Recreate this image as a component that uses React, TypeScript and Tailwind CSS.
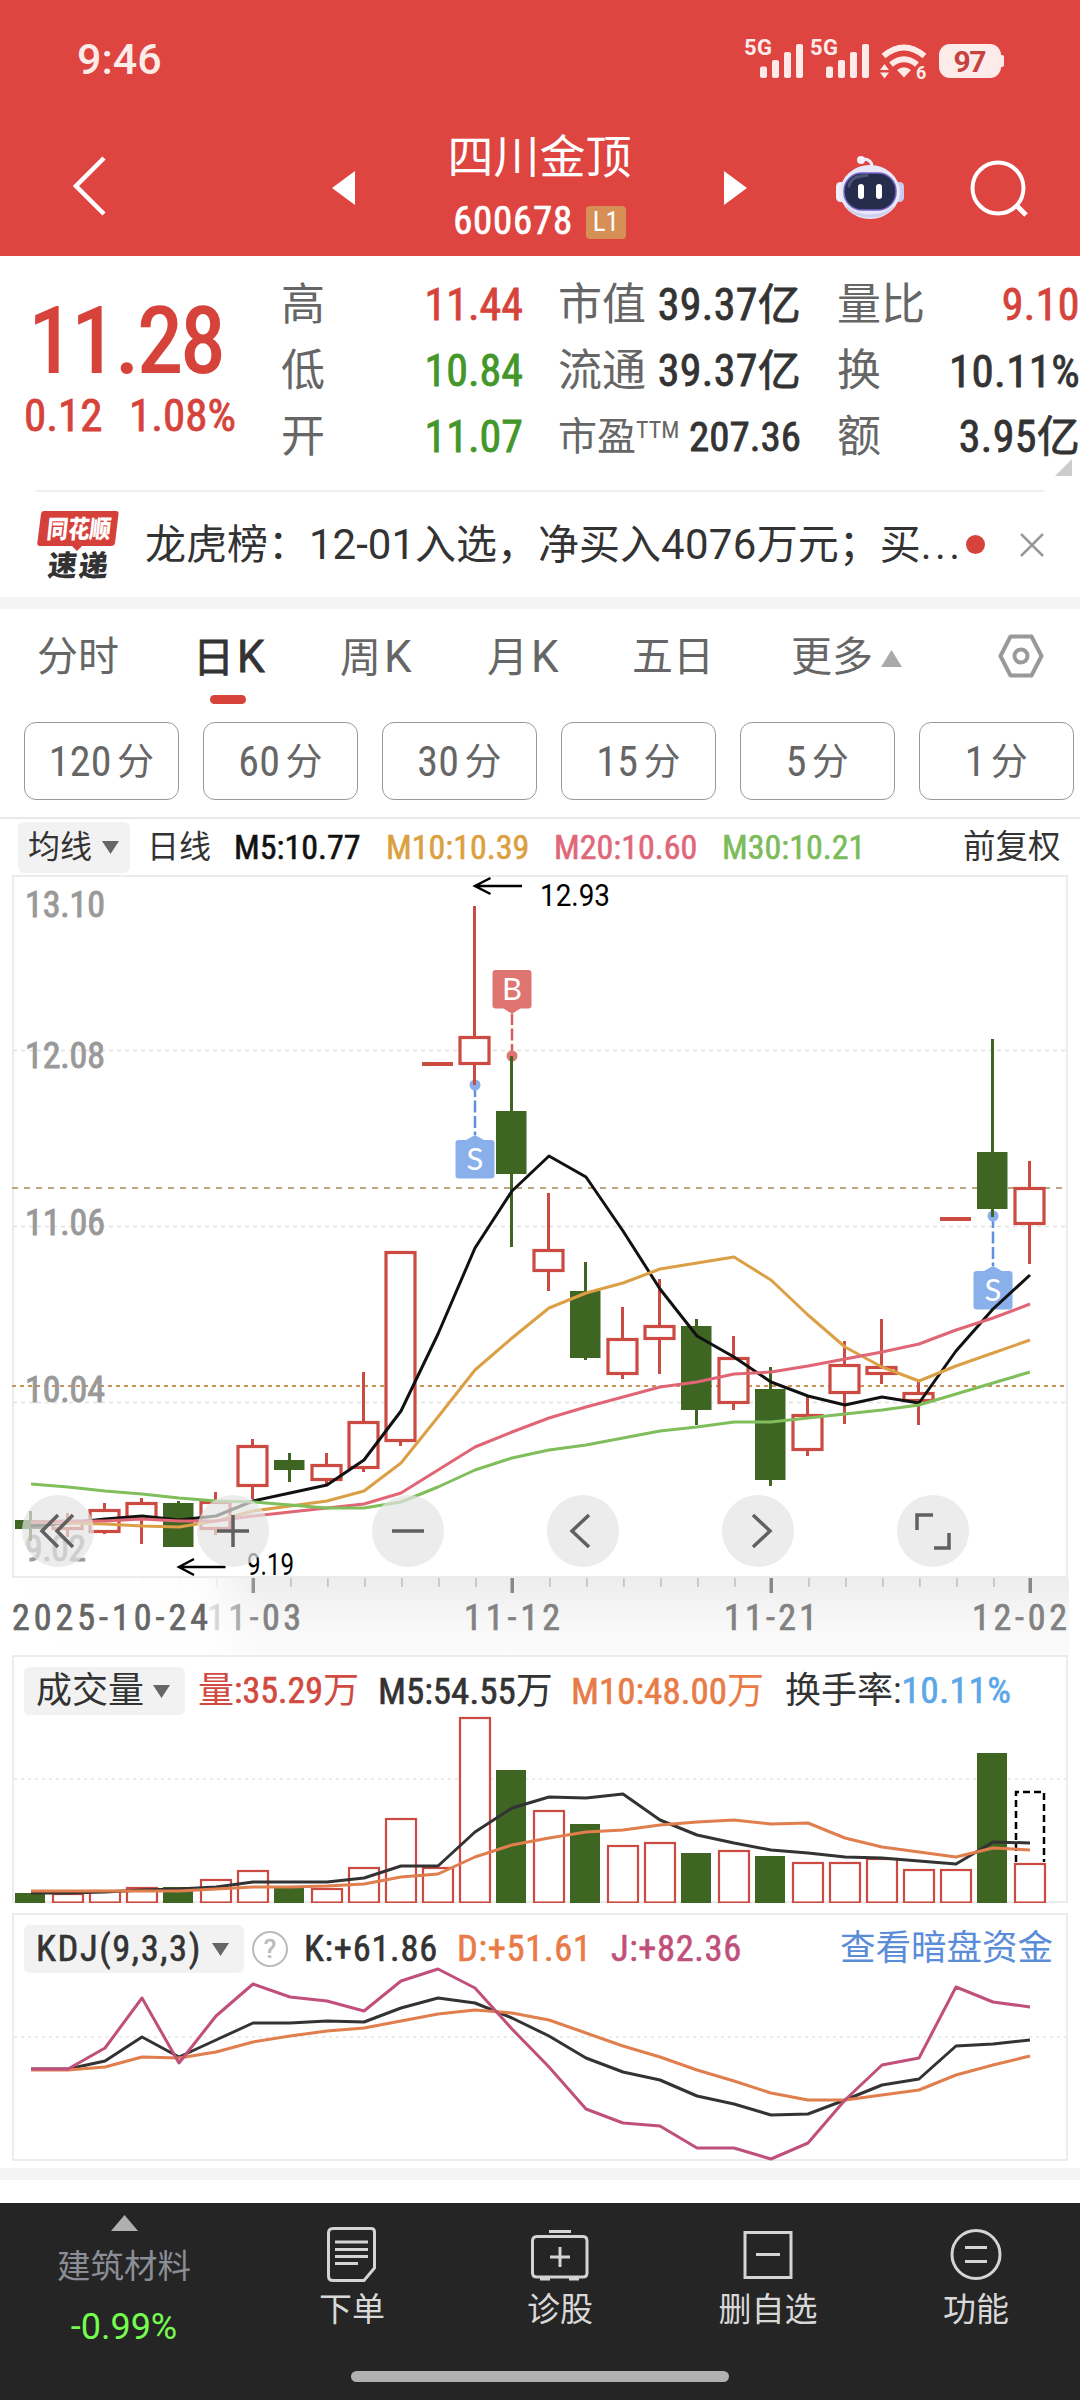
import type { ReactNode } from 'react';

type Candle = { up: boolean; high: number; top: number; bottom: number; low: number };

// 28 daily candles, oldest first, in chart units
const candles: Candle[] = [
    { up: false, high: 1511, top: 1520, bottom: 1529, low: 1541 },
    { up: true, high: 1513, top: 1520, bottom: 1530, low: 1537 },
    { up: true, high: 1503, top: 1509, bottom: 1533, low: 1534 },
    { up: true, high: 1498, top: 1502, bottom: 1519, low: 1544 },
    { up: false, high: 1501, top: 1503, bottom: 1547, low: 1547 },
    { up: true, high: 1492, top: 1501, bottom: 1530, low: 1535 },
    { up: true, high: 1439, top: 1445, bottom: 1487, low: 1499 },
    { up: false, high: 1453, top: 1460, bottom: 1470, low: 1482 },
    { up: true, high: 1453, top: 1464, bottom: 1481, low: 1486 },
    { up: true, high: 1372, top: 1421, bottom: 1469, low: 1472 },
    { up: true, high: 1251, top: 1251, bottom: 1442, low: 1446 },
    { up: true, high: 1062, top: 1062, bottom: 1066, low: 1066 },
    { up: true, high: 906, top: 1036, bottom: 1065, low: 1085 },
    { up: false, high: 1056, top: 1111, bottom: 1174, low: 1247 },
    { up: true, high: 1193, top: 1249, bottom: 1272, low: 1291 },
    { up: false, high: 1262, top: 1291, bottom: 1358, low: 1360 },
    { up: true, high: 1307, top: 1338, bottom: 1375, low: 1379 },
    { up: true, high: 1279, top: 1325, bottom: 1340, low: 1374 },
    { up: false, high: 1319, top: 1326, bottom: 1410, low: 1425 },
    { up: true, high: 1336, top: 1357, bottom: 1404, low: 1410 },
    { up: false, high: 1367, top: 1389, bottom: 1480, low: 1486 },
    { up: true, high: 1396, top: 1414, bottom: 1451, low: 1456 },
    { up: true, high: 1341, top: 1364, bottom: 1394, low: 1424 },
    { up: true, high: 1319, top: 1366, bottom: 1375, low: 1384 },
    { up: true, high: 1381, top: 1392, bottom: 1402, low: 1425 },
    { up: true, high: 1217, top: 1217, bottom: 1221, low: 1221 },
    { up: false, high: 1039, top: 1152, bottom: 1209, low: 1217 },
    { up: true, high: 1161, top: 1187, bottom: 1225, low: 1264 },
];

const ma5 = [1526, 1523, 1519, 1516, 1520, 1516, 1501, 1493, 1485, 1460, 1411, 1334, 1248, 1191, 1156, 1177, 1231, 1289, 1336, 1357, 1382, 1396, 1405, 1397, 1403, 1351, 1309, 1275];
const ma10 = [1522, 1523, 1524, 1526, 1527, 1521, 1511, 1506, 1501, 1491, 1463, 1417, 1370, 1338, 1308, 1293, 1283, 1269, 1263, 1257, 1280, 1315, 1347, 1367, 1381, 1366, 1353, 1340];
const ma20 = [1522, 1521, 1521, 1519, 1521, 1521, 1516, 1512, 1508, 1504, 1493, 1470, 1447, 1432, 1418, 1407, 1397, 1387, 1382, 1374, 1372, 1366, 1359, 1352, 1344, 1330, 1318, 1304];
const ma30 = [1484, 1487, 1491, 1494, 1498, 1501, 1502, 1505, 1508, 1508, 1502, 1487, 1470, 1458, 1450, 1445, 1438, 1431, 1427, 1422, 1422, 1418, 1414, 1410, 1405, 1394, 1383, 1372];

const volumes = [1893, 1893, 1890, 1887, 1887, 1879, 1870, 1887, 1888, 1867, 1818, 1867, 1717, 1770, 1810, 1824, 1845, 1842, 1853, 1850, 1856, 1862, 1862, 1858, 1869, 1869, 1753, 1863];
const vol5 = [1893, 1893, 1892, 1890, 1889, 1887, 1882, 1882, 1882, 1878, 1866, 1866, 1832, 1808, 1797, 1798, 1794, 1820, 1835, 1843, 1850, 1853, 1857, 1858, 1861, 1864, 1842, 1843];
const vol10 = [1891, 1891, 1891, 1891, 1891, 1889, 1887, 1887, 1886, 1884, 1877, 1874, 1857, 1845, 1838, 1832, 1830, 1825, 1822, 1820, 1824, 1823, 1838, 1847, 1852, 1857, 1848, 1850];

const kLine = [2069, 2069, 2061, 2037, 2057, 2040, 2023, 2023, 2021, 2022, 2008, 1998, 2003, 2018, 2036, 2058, 2072, 2080, 2096, 2104, 2115, 2114, 2100, 2085, 2079, 2046, 2044, 2040];
const dLine = [2070, 2070, 2067, 2057, 2058, 2052, 2042, 2036, 2031, 2028, 2021, 2014, 2010, 2013, 2020, 2033, 2046, 2057, 2070, 2081, 2093, 2100, 2100, 2095, 2090, 2075, 2065, 2056];
const jLine = [2069, 2069, 2048, 1998, 2063, 2016, 1984, 1997, 2001, 2011, 1981, 1969, 1988, 2029, 2067, 2109, 2123, 2126, 2148, 2148, 2159, 2143, 2100, 2065, 2058, 1987, 2002, 2007];

const RED = '#cb4a42';
const GREEN = '#3f6522';

const xAt = (i: number) => 31 + i * 37;
const toPoints = (values: number[]) => values.map((y, i) => `${xAt(i)},${y}`).join(' ');

function Line({ values, color, width = 3 }: { values: number[]; color: string; width?: number }) {
    return <polyline points={toPoints(values)} fill="none" stroke={color} strokeWidth={width} strokeLinejoin="round" />;
}

function StatusBar() {
    return (
        <div className="flex h-[118px] items-center justify-between pr-[70px] pl-[77px] text-[#fdebea]">
            <span className="text-[43px] leading-none font-medium font-['Roboto']">9:46</span>
            <svg width="270" height="60" viewBox="740 27 270 60" fill="currentColor">
                <g fontFamily="Roboto" fontWeight="700" fontSize="22">
                    <text x="744" y="53" textLength="28">5G</text>
                    <text x="810" y="53" textLength="28">5G</text>
                </g>
                {[0, 66].map((dx) => (
                    <g key={dx}>
                        <rect x={760 + dx} y="64.5" width="7" height="11.5" rx="2" />
                        <rect x={772 + dx} y="58" width="7" height="18" rx="2" />
                        <rect x={784 + dx} y="50" width="7" height="26" rx="2" />
                        <rect x={796 + dx} y="42" width="7" height="34" rx="2" />
                    </g>
                ))}
                <path d="M883.500 54 Q904 37 924.500 54" fill="none" stroke="currentColor" strokeWidth="6" />
                <path d="M891 62.500 Q904 52 917 62.500" fill="none" stroke="currentColor" strokeWidth="6" />
                <path d="M897 68 Q904 62.500 911 68 L904 75.500Z" />
                <path d="M880 68 L884.500 62 L889 68Z M880 70.500 L884.500 76.500 L889 70.500Z" />
                <text x="916" y="77" fontFamily="Roboto" fontWeight="700" fontSize="18">6</text>
                <rect x="939" y="42" width="62" height="34" rx="11" />
                <rect x="999" y="53" width="5" height="12" rx="2" />
                <text x="970" y="70" textAnchor="middle" fontFamily="Roboto" fontWeight="700" fontSize="30" fill="#c5423f" textLength="33">97</text>
            </svg>
        </div>
    );
}

function RobotIcon() {
    return (
        <svg width="70" height="66" viewBox="0 0 70 66">
            <path d="M37 13 C37 7 33 5 28 5" fill="none" stroke="#ece9fa" strokeWidth="3" />
            <circle cx="26" cy="6" r="4" fill="#f3effb" />
            <rect x="1" y="28" width="9" height="20" rx="4.500" fill="#efeefa" />
            <rect x="60" y="28" width="9" height="20" rx="4.500" fill="#c9cbf3" />
            <ellipse cx="35" cy="38" rx="30" ry="27" fill="#e9e8f8" />
            <path d="M10 50 C20 64 50 64 60 50 C54 68 16 68 10 50Z" fill="#cfd0f0" />
            <rect x="9" y="19" width="52" height="37" rx="18" fill="#262c4c" stroke="#7364c8" strokeWidth="1.500" />
            <path d="M14 32 C16 24 22 22 32 21.500" fill="none" stroke="#4c5474" strokeWidth="3" strokeLinecap="round" />
            <rect x="23" y="30" width="6" height="15" rx="3" fill="#fff" />
            <rect x="41" y="30" width="6" height="15" rx="3" fill="#fff" />
        </svg>
    );
}

function Header() {
    return (
        <header className="h-[256px] bg-[#de4440] text-white">
            <StatusBar />
            <nav className="flex h-[138px] items-center pl-[73px]">
                <svg width="34" height="60" viewBox="0 0 34 60" fill="none" stroke="white" strokeWidth="4.500" className="mb-0.5">
                    <path d="M31 2 L3 30 L31 58" />
                </svg>
                <svg width="23" height="34" viewBox="0 0 23 34" fill="white" className="mt-0.5 ml-[225px]">
                    <path d="M23 0 V34 L0 17Z" />
                </svg>
                <div className="flex w-[369px] flex-col items-center">
                    <h1 className="text-[46px] leading-[54px]">四川金顶</h1>
                    <div className="mt-[11px] flex items-center gap-[13px]">
                        <span className="pt-[3px] text-[39px] leading-[47px] tracking-[0.7px] [-webkit-text-stroke:0.7px]">600678</span>
                        <span className="mt-[5px] flex h-[33px] w-10 items-center justify-center rounded bg-[#d68f55] text-[27px] leading-none">L1</span>
                    </div>
                </div>
                <svg width="23" height="34" viewBox="0 0 23 34" fill="white" className="mt-0.5">
                    <path d="M0 0 V34 L23 17Z" />
                </svg>
                <div className="ml-[88px]">
                    <RobotIcon />
                </div>
                <svg width="58" height="58" viewBox="0 0 58 58" fill="none" stroke="white" strokeWidth="4" className="mt-[3px] ml-[65px]">
                    <circle cx="28" cy="28" r="25.500" />
                    <path d="M46 45 L56 55" strokeWidth="5" />
                </svg>
            </nav>
        </header>
    );
}

function Label({ children }: { children: ReactNode }) {
    return <dt className="text-[#666] [-webkit-text-stroke:0px]">{children}</dt>;
}

function Quote() {
    return (
        <section className="relative flex h-[234px] pt-[16px] leading-none text-[#333] [-webkit-text-stroke:0.8px]">
            <div className="w-[271px] text-[#d6433b]">
                <div className="mt-[23px] pl-[29px] text-[91px] leading-[92px] tracking-[-1.8px] [-webkit-text-stroke:2px]">11.28</div>
                <div className="mt-[3px] flex pl-[24px] text-[45px] leading-[52px]">
                    <span className="w-[105px]">0.12</span>
                    <span>1.08%</span>
                </div>
            </div>
            <dl className="grid w-[252px] auto-rows-[66px] grid-cols-[auto_1fr] items-center pl-[10px] text-[44px]">
                <Label>高</Label>
                <dd className="text-right text-[#d6433b]">11.44</dd>
                <Label>低</Label>
                <dd className="text-right text-[#43962a]">10.84</dd>
                <Label>开</Label>
                <dd className="text-right text-[#43962a]">11.07</dd>
            </dl>
            <dl className="ml-[35px] grid w-[243px] auto-rows-[66px] grid-cols-[auto_1fr] items-center text-[44px]">
                <Label>市值</Label>
                <dd className="text-right tracking-[0.3px]">
                    39.37<span className="text-[43px]">亿</span>
                </dd>
                <Label>流通</Label>
                <dd className="text-right tracking-[0.3px]">
                    39.37<span className="text-[43px]">亿</span>
                </dd>
                <div className="col-span-2 flex items-center justify-between text-[41px]">
                    <dt className="flex text-[39px] text-[#666] [-webkit-text-stroke:0px]">
                        市盈
                        <span className="text-[24px] leading-[24px]">TTM</span>
                    </dt>
                    <dd>207.36</dd>
                </div>
            </dl>
            <dl className="ml-[36px] grid w-[243px] auto-rows-[66px] grid-cols-[auto_1fr] items-center text-[44px]">
                <Label>量比</Label>
                <dd className="text-right tracking-[0.4px] text-[#d6433b]">9.10</dd>
                <Label>换</Label>
                <dd className="text-right text-[45px] tracking-[0.3px]">10.11%</dd>
                <Label>额</Label>
                <dd className="text-right tracking-[0.3px]">
                    3.95<span className="text-[43px]">亿</span>
                </dd>
            </dl>
            <svg width="17" height="17" viewBox="0 0 17 17" className="absolute right-2 bottom-[14px] fill-[#ccc]">
                <path d="M17 0 V17 H0Z" />
            </svg>
        </section>
    );
}

function NewsTicker() {
    return (
        <section className="mx-9 flex h-[107px] items-center border-t-2 border-[#eee]">
            <svg width="100" height="84" viewBox="0 -7 100 84" fontFamily="'Noto Sans CJK SC', sans-serif" fontWeight="900" className="shrink-0">
                <path d="M8 1 H80 Q83 1 82.500 4 L79 33 Q78.500 36 75 36 H46 L41 41 L36 36 H4 Q1 36 1.300 33 L5 4 Q5.400 1 8 1Z" fill="#d6403a" />
                <text x="13" y="28" fontSize="25" fill="#fff" textLength="64" lengthAdjust="spacingAndGlyphs" transform="skewX(-6)">同花顺</text>
                <text x="18" y="66" fontSize="29" fill="#333" textLength="60" transform="skewX(-6)">速递</text>
            </svg>
            <p className="ml-[9px] w-[821px] shrink-0 text-[41px] leading-none whitespace-nowrap text-[#333]">
                龙虎榜：<span className="font-['Roboto'] text-[42px]">12-01</span>入选，净买入
                <span className="font-['Roboto'] text-[42px] tracking-[0.3px]">4076</span>万元；买<span className="tracking-[3.5px]">...</span>
            </p>
            <span className="h-[19px] w-[19px] rounded-full bg-[#d6433b]" />
            <svg width="24" height="24" viewBox="0 0 24 24" stroke="#999" strokeWidth="2.500" className="ml-[35px]">
                <path d="M1 1 L23 23 M23 1 L1 23" />
            </svg>
        </section>
    );
}

const periods = [
    { label: '分时', width: 'w-[156px]' },
    { label: '日K', width: 'w-[147px]', active: true },
    { label: '周K', width: 'w-[147px]' },
    { label: '月K', width: 'w-[145px]' },
    { label: '五日', width: 'w-[159px]' },
];

function PeriodTabs() {
    return (
        <nav className="flex h-[97px] items-start pt-[17px] pl-[37px] text-[41px] leading-[62px] text-[#666]">
            {periods.map(({ label, width, active }) => (
                <div key={label} className={width}>
                    <div className={active ? 'relative inline-block text-[#333] [-webkit-text-stroke:0.8px]' : 'inline-block'}>
                        {label.replace('K', '')}
                        {label.endsWith('K') && <span className="ml-[3px] text-[44px] font-['Roboto']">K</span>}
                        {active && <span className="absolute top-[69px] left-[17px] h-[9px] w-9 rounded-full bg-[#d6433b]" />}
                    </div>
                </div>
            ))}
            <div className="flex items-center">
                更多
                <svg width="21" height="17" viewBox="0 0 21 17" className="mt-0.5 ml-2 fill-[#aaa]">
                    <path d="M10.500 0 L21 17 H0Z" />
                </svg>
            </div>
            <svg width="46" height="44" viewBox="0 0 46 44" fill="none" stroke="#999" strokeWidth="4" strokeLinejoin="round" className="mt-[8px] ml-[96px]">
                <path d="M12.500 2.500 H33.500 L43.500 22 L33.500 41.500 H12.500 L2.500 22Z" />
                <circle cx="23" cy="22" r="6.500" />
            </svg>
        </nav>
    );
}

function MinuteButtons() {
    return (
        <div className="flex gap-6 pt-4 pl-6">
            {['120', '60', '30', '15', '5', '1'].map((minutes) => (
                <button
                    key={minutes}
                    className="flex h-[78px] w-[155px] shrink-0 items-center justify-center gap-[5px] rounded-[12px] border border-[#999] pt-0.5 text-[42px] leading-none tracking-[0.3px] text-[#666]"
                >
                    {minutes}
                    <span className="text-[37px]">分</span>
                </button>
            ))}
        </div>
    );
}

function Chip({ className, children }: { className: string; children: ReactNode }) {
    return (
        <button className={`flex shrink-0 items-center justify-between rounded-md bg-[#f2f2f2] leading-none text-[#333] ${className}`}>
            {children}
            <svg width="17" height="13" viewBox="0 0 17 13" className="fill-[#666]">
                <path d="M0 0 H17 L8.500 13Z" />
            </svg>
        </button>
    );
}

function AverageLegend() {
    return (
        <div className="mt-[17px] flex h-[58px] items-center border-t-2 border-[#e8e8e8] pl-[18px] text-[34px] leading-none [-webkit-text-stroke:0.6px]">
            <Chip className="h-[51px] w-28 pr-[11px] pl-[10px] text-[32px] [-webkit-text-stroke:0px]">均线</Chip>
            <span className="ml-[17px] w-[87px] text-[32px] text-[#333] [-webkit-text-stroke:0px]">日线</span>
            <span className="w-[152px] text-[#111]">M5:10.77</span>
            <span className="w-[168px] text-[#dba03f]">M10:10.39</span>
            <span className="w-[168px] text-[#e0677a]">M20:10.60</span>
            <span className="w-[241px] text-[#7cbb5a]">M30:10.21</span>
            <span className="text-[32.5px] text-[#333] [-webkit-text-stroke:0px]">前复权</span>
        </div>
    );
}

function TradeMark({ x, y, side, dotY }: { x: number; y: number; side: 'B' | 'S'; dotY: number }) {
    const buy = side === 'B';
    const fill = buy ? '#df7571' : '#8ab0ec';
    const tip = buy ? y + 44 : y - 5;
    const base = buy ? y + 38 : y;
    return (
        <g>
            <line x1={x} x2={x} y1={dotY} y2={tip} stroke={buy ? '#d4605c' : '#5f92dd'} strokeWidth="2.500" strokeDasharray="12 3.500" />
            <circle cx={x} cy={dotY} r="5.500" fill={fill} />
            <path d={`M${x - 9} ${base} L${x} ${tip} L${x + 9} ${base}Z`} fill={fill} />
            <rect x={x - 19.5} y={y} width="39" height="38.500" rx="3" fill={fill} />
            <text x={x} y={y + 30} textAnchor="middle" fontFamily="Lato" fontSize="31" fill="#fff">
                {side}
            </text>
        </g>
    );
}

function CandleShape({ candle, x }: { candle: Candle; x: number }) {
    const { up, high, top, bottom, low } = candle;
    if (bottom - top <= 4) {
        return <rect x={x - 16} y={top} width="31" height="4" fill={RED} />;
    }
    const color = up ? RED : GREEN;
    return (
        <g>
            <line x1={x - 0.5} x2={x - 0.5} y1={high} y2={low} stroke={color} strokeWidth="3" />
            {up ? (
                <rect x={x - 15} y={top + 1.5} width="29" height={bottom - top - 3} fill="#fff" stroke={RED} strokeWidth="3.200" />
            ) : (
                <rect x={x - 16} y={top} width="30.500" height={bottom - top} fill={GREEN} />
            )}
        </g>
    );
}

const priceLabels = [
    { text: '13.10', y: 917 },
    { text: '12.08', y: 1068 },
    { text: '11.06', y: 1235 },
    { text: '10.04', y: 1402 },
    { text: '9.02', y: 1561 },
];

function PriceChart() {
    return (
        <svg width="1080" height="780" viewBox="0 875 1080 780" className="block">
            <defs>
                <linearGradient id="axisShade" x1="0" y1="0" x2="0" y2="1">
                    <stop offset="0" stopColor="#ededed" />
                    <stop offset="0.6" stopColor="#f8f8f8" />
                    <stop offset="1" stopColor="#fbfbfb" />
                </linearGradient>
                <linearGradient id="axisFade" x1="0" y1="0" x2="1" y2="0">
                    <stop offset="0" stopColor="#fff" />
                    <stop offset="0.78" stopColor="#fff" stopOpacity="0.9" />
                    <stop offset="1" stopColor="#fff" stopOpacity="0" />
                </linearGradient>
            </defs>

            {/* Frame and grid */}
            <rect x="13" y="876" width="1054" height="701" fill="#fff" stroke="#ececec" strokeWidth="2" />
            {[1050.5, 1226.5, 1402.5].map((y) => (
                <line key={y} x1="13" x2="1066" y1={y} y2={y} stroke="#e0e0e0" strokeWidth="1.300" strokeDasharray="4 4" />
            ))}
            <line x1="12" x2="1066" y1="1188" y2="1188" stroke="#b8a67c" strokeWidth="2" strokeDasharray="6 6" />
            <line x1="12" x2="1066" y1="1386" y2="1386" stroke="#cb935c" strokeWidth="2" strokeDasharray="4 4" />
            <g fontFamily="Roboto Condensed" fontSize="36" fill="#999" stroke="#999" strokeWidth="0.900">
                {priceLabels.map(({ text, y }) => (
                    <text key={text} x="25" y={y} textLength={text.length === 5 ? 80 : 61}>
                        {text}
                    </text>
                ))}
            </g>

            <TradeMark x={512} y={970} side="B" dotY={1056} />
            <TradeMark x={475} y={1140} side="S" dotY={1085} />
            <TradeMark x={993} y={1271} side="S" dotY={1216} />

            {candles.map((candle, i) => (
                <CandleShape key={i} candle={candle} x={xAt(i)} />
            ))}

            <Line values={ma5} color="#111" />
            <Line values={ma10} color="#dba045" />
            <Line values={ma20} color="#e06676" />
            <Line values={ma30} color="#80bd5b" />

            {/* Highest and lowest price */}
            <g fill="none" stroke="#000" strokeWidth="2.500">
                <path d="M522 886 H475 M490.500 878 L475 886 L490.500 894" />
                <path d="M225.500 1567 H179 M194 1559 L179 1567 L194 1575" />
            </g>
            <g fontFamily="Roboto" fontSize="31" fill="#000">
                <text x="540" y="906" textLength="70" lengthAdjust="spacingAndGlyphs">12.93</text>
                <text x="247" y="1575" textLength="47" lengthAdjust="spacingAndGlyphs">9.19</text>
            </g>

            {/* Date axis */}
            <rect x="12" y="1578" width="1057" height="77" fill="url(#axisShade)" />
            {candles.map((_, i) =>
                i % 7 === 6 ? (
                    <rect key={i} x={xAt(i) - 1.5} y="1578" width="3.500" height="15" fill="#888" />
                ) : (
                    <rect key={i} x={xAt(i)} y="1578" width="1.800" height="9" fill="#c6c6c6" />
                ),
            )}
            <g fontFamily="Roboto Condensed" fontSize="36" fill="#828282" stroke="#828282" strokeWidth="0.700">
                <text x="207" y="1630" textLength="94">11-03</text>
                <text x="464" y="1630" textLength="96">11-12</text>
                <text x="724" y="1630" textLength="93">11-21</text>
                <text x="972" y="1630" textLength="95">12-02</text>
            </g>
            <rect x="0" y="1578" width="260" height="77" fill="url(#axisFade)" />
            <text x="12" y="1630" textLength="196" fontFamily="Roboto Condensed" fontSize="36" fill="#666" stroke="#666" strokeWidth="0.700">
                2025-10-24
            </text>
        </svg>
    );
}

const controls = [
    { name: 'back', path: 'M18 2 L2 18 L18 34 M33 2 L17 18 L33 34' },
    { name: 'zoom in', path: 'M2 18 H34 M18 2 V34' },
    { name: 'zoom out', path: 'M2 18 H34' },
    { name: 'previous', path: 'M24 2 L7 18 L24 34' },
    { name: 'next', path: 'M13 2 L30 18 L13 34' },
    { name: 'full screen', path: 'M18 2 H2 V17 M19 35 H34 V20' },
];

function ChartControls() {
    return (
        <div className="absolute top-[620px] left-[22px] flex gap-[103px]">
            {controls.map(({ name, path }) => (
                <button key={name} aria-label={name} className="flex size-[72px] items-center justify-center rounded-full bg-[#e4e4e4]/70">
                    <svg width="36" height="36" viewBox="0 0 36 36" fill="none" stroke="#606060" strokeWidth="3.500" className="overflow-visible">
                        <path d={path} />
                    </svg>
                </button>
            ))}
        </div>
    );
}

function VolumePanel() {
    return (
        <section className="relative mx-3 h-[248px] border-2 border-[#ececec]">
            <svg width="1080" height="248" viewBox="0 1655 1080 248" className="absolute -top-0.5 -left-3.5">
                <line x1="14" x2="1066" y1="1779" y2="1779" stroke="#e6e6e6" strokeWidth="1.500" strokeDasharray="3 4" />
                {volumes.map((top, i) =>
                    candles[i].up ? (
                        <rect key={i} x={xAt(i) - 15} y={top + 1} width="30" height={1901.5 - top} fill="#fff" stroke={RED} strokeWidth="2.200" />
                    ) : (
                        <rect key={i} x={xAt(i) - 16} y={top} width="30" height={1903 - top} fill={GREEN} />
                    ),
                )}
                <path d="M1016 1862 V1792 H1044 V1862" fill="none" stroke="#000" strokeWidth="2.500" strokeDasharray="7 4" />
                <Line values={vol5} color="#333" />
                <Line values={vol10} color="#e07e4e" />
            </svg>
            <div className="relative mt-[10px] flex h-[48px] items-center pl-[10px] text-[36px] leading-none text-[#333]">
                <Chip className="h-[48px] w-[161px] pr-[15px] pl-3">成交量</Chip>
                <span className="ml-[13px] w-[180px] text-[#d04a41]">
                    量<span className="[-webkit-text-stroke:0.6px]">:35.29</span>万
                </span>
                <span className="w-[193px] text-[37px]">
                    <span className="[-webkit-text-stroke:0.6px]">M5:54.55</span>万
                </span>
                <span className="w-[214px] text-[37px] text-[#e87b47]">
                    <span className="[-webkit-text-stroke:0.6px]">M10:48.00</span>万
                </span>
                <span className="whitespace-nowrap">
                    换手率:<span className="text-[37.5px] tracking-[0.4px] text-[#5ba7e8] [-webkit-text-stroke:0.6px]">10.11%</span>
                </span>
            </div>
        </section>
    );
}

function KdjPanel() {
    return (
        <section className="relative mx-3 mt-[10px] h-[248px] border-2 border-[#ececec]">
            <svg width="1080" height="248" viewBox="0 1913 1080 248" className="absolute -top-0.5 -left-3.5">
                <line x1="14" x2="1066" y1="2037" y2="2037" stroke="#e6e6e6" strokeWidth="1.500" strokeDasharray="3 4" />
                <Line values={kLine} color="#333" />
                <Line values={dLine} color="#e07e4e" />
                <Line values={jLine} color="#c0507b" />
            </svg>
            <div className="relative mt-[10px] flex h-[48px] items-center pl-[10px] text-[36.5px] leading-none text-[#333] [-webkit-text-stroke:0.6px]">
                <Chip className="h-[48px] w-[220px] pr-[15px] pl-3 tracking-[1.6px]">KDJ(9,3,3)</Chip>
                <span className="ml-2 flex size-9 items-center justify-center rounded-full border-[2.5px] border-[#bbb] font-['Roboto'] text-[26px] text-[#bbb]">?</span>
                <span className="ml-[16px] w-[153px] tracking-[0.7px]">K:+61.86</span>
                <span className="w-[154px] tracking-[0.7px] text-[#e87b47]">D:+51.61</span>
                <span className="w-[229px] tracking-[0.6px] text-[#c0507b]">J:+82.36</span>
                <a className="text-[35.5px] whitespace-nowrap text-[#5b8cd8] [-webkit-text-stroke:0px]">查看暗盘资金</a>
            </div>
        </section>
    );
}

function NavItem({ label, children }: { label: string; children: ReactNode }) {
    return (
        <button className="flex w-[208px] flex-col items-center pt-[22px] text-[33px] leading-none text-[#d8d8d8]">
            <svg width="60" height="58" viewBox="0 0 60 58" fill="none" stroke="#d4d4d4" strokeWidth="3">
                {children}
            </svg>
            <span className="mt-[10px]">{label}</span>
        </button>
    );
}

function BottomBar() {
    return (
        <footer className="mt-[23px] flex h-[197px] flex-col items-center bg-[#252525]">
            <div className="flex h-[168px] w-full">
                <div className="flex w-[248px] flex-col items-center pt-3 leading-none">
                    <svg width="27" height="16" viewBox="0 0 27 16" className="fill-[#b0b0b0]">
                        <path d="M13.500 0 L27 16 H0Z" />
                    </svg>
                    <span className="mt-[19px] text-[33.5px] text-[#8b8d96]">建筑材料</span>
                    <span className="mt-[25px] font-['Roboto'] text-[36px] text-[#76fb4f]">-0.99%</span>
                </div>
                <NavItem label="下单">
                    <path d="M11 3.500 H49 Q52.500 3.500 52.500 7 V43 L42 55.500 H11 Q6.500 55.500 6.500 51 V8 Q6.500 3.500 11 3.500Z" />
                    <path d="M13 17 H46 M13 24.500 H46 M13 31.500 H46 M13 38.500 H36" />
                </NavItem>
                <NavItem label="诊股">
                    <path d="M7 11.500 H53 Q57 11.500 57 16 V48 Q57 52 53 52 H7 Q2.500 52 2.500 48 V16 Q2.500 11.500 7 11.500Z" />
                    <path d="M19 6.500 H41 M30 22 V42 M20 32 H40 M10 54 H20 M39 54 H49" />
                </NavItem>
                <NavItem label="删自选">
                    <path d="M7 7.500 H53 V52.500 H7Z M18 29.500 H42" />
                </NavItem>
                <NavItem label="功能">
                    <circle cx="30" cy="29.500" r="24" />
                    <path d="M19 22.500 H41 M19 36.500 H41" />
                </NavItem>
            </div>
            <div className="h-[11px] w-[378px] rounded-full bg-[#b1b1b1]" />
        </footer>
    );
}

export default function App() {
    return (
        <div className="h-[2400px] w-[1080px] overflow-hidden bg-white font-['Roboto_Condensed','Noto_Sans_CJK_SC',sans-serif]">
            <Header />
            <Quote />
            <NewsTicker />
            <div className="h-3 bg-[#f4f4f4]" />
            <PeriodTabs />
            <MinuteButtons />
            <AverageLegend />
            <div className="relative">
                <PriceChart />
                <ChartControls />
            </div>
            <VolumePanel />
            <KdjPanel />
            <div className="mt-[7px] h-3 bg-[#f4f4f4]" />
            <BottomBar />
        </div>
    );
}
